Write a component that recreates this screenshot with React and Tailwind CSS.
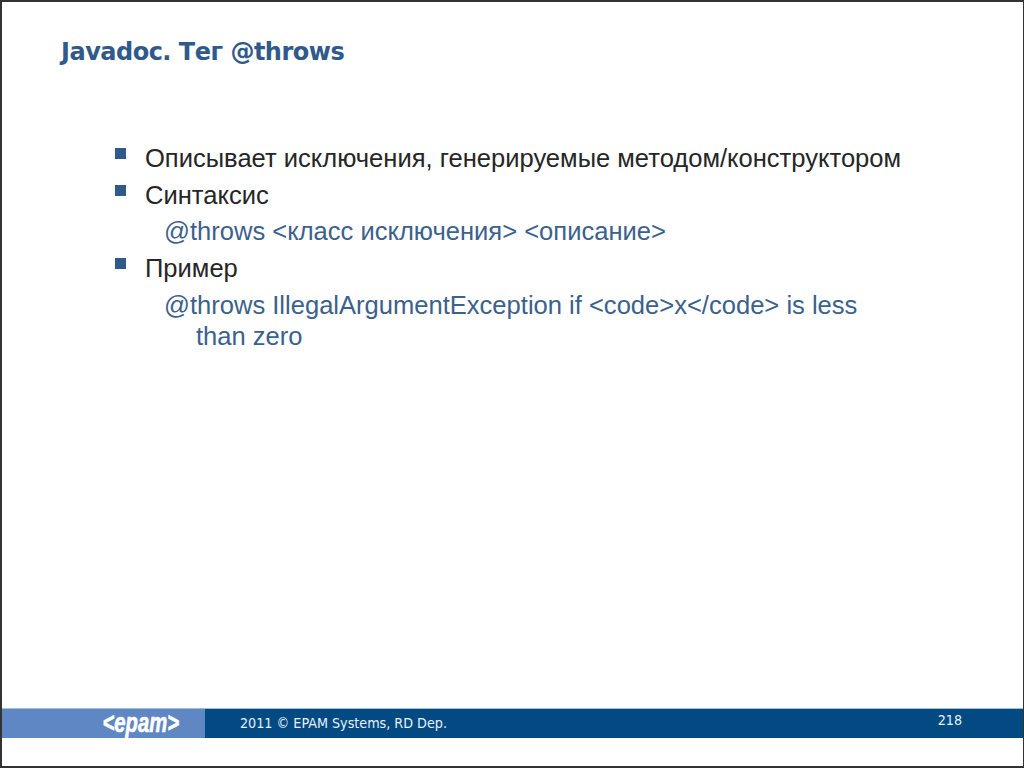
export default function App() {
  const body = "font-['Liberation_Sans',Arial,sans-serif]";
  return (
    <div className="w-[1024px] h-[768px] bg-white border-t-2 border-l-2 border-r border-b-2 border-[#333] flex flex-col overflow-hidden">
      <h1 className="ml-[59px] mt-[34px] h-[32px] leading-[32px] text-[24px] tracking-[-0.5px] font-bold text-[#30598c] font-['DejaVu_Sans',Verdana,sans-serif]">
        Javadoc. Тег @throws
      </h1>
      <div className={`${body} ml-[113px] mt-[72px] text-[25.55px] flex flex-col grow`}>
        <Item top="h-[37px]">Описывает исключения, генерируемые методом/конструктором</Item>
        <Item top="h-[36px]">Синтаксис</Item>
        <p className="ml-[49px] h-[37px] leading-[37px] text-[#3b618c]">@throws &lt;класс исключения&gt; &lt;описание&gt;</p>
        <Item top="h-[37px]">Пример</Item>
        <p className="ml-[49px] w-[720px] pl-[32px] -indent-[32px] leading-[31px] mt-[3px] text-[#3b618c]">
          @throws IllegalArgumentException if &lt;code&gt;x&lt;/code&gt; is less than zero
        </p>
      </div>
      <footer className="h-[30px] mb-[28px] flex shrink-0 border-t border-[#9fc0dd] bg-[#034a83]">
        <div className="w-[203px] bg-[#5f87c3] flex items-center justify-end pr-[26px]">
          <span className="font-['Liberation_Sans',sans-serif] font-bold italic text-white text-[27px] leading-none scale-x-[0.75] origin-right [-webkit-text-stroke:0.6px_white]">&lt;epam&gt;</span>
        </div>
        <div className="grow flex items-center pl-[35px] pr-[61px] justify-between font-['DejaVu_Sans',Tahoma,sans-serif] [font-stretch:condensed] text-[#e6f1fa] text-[14.2px]">
          <span>2011 © EPAM Systems, RD Dep.</span>
          <span className="-mt-[5px]">218</span>
        </div>
      </footer>
    </div>
  );
}
function Item({ children, top }) {
  return (
    <div className={`flex items-center ${top} text-[#262626]`}>
      <span className="w-[11px] h-[11px] bg-[#30598c] mr-[19px] -mt-[10px] shrink-0" />
      <span>{children}</span>
    </div>
  );
}
